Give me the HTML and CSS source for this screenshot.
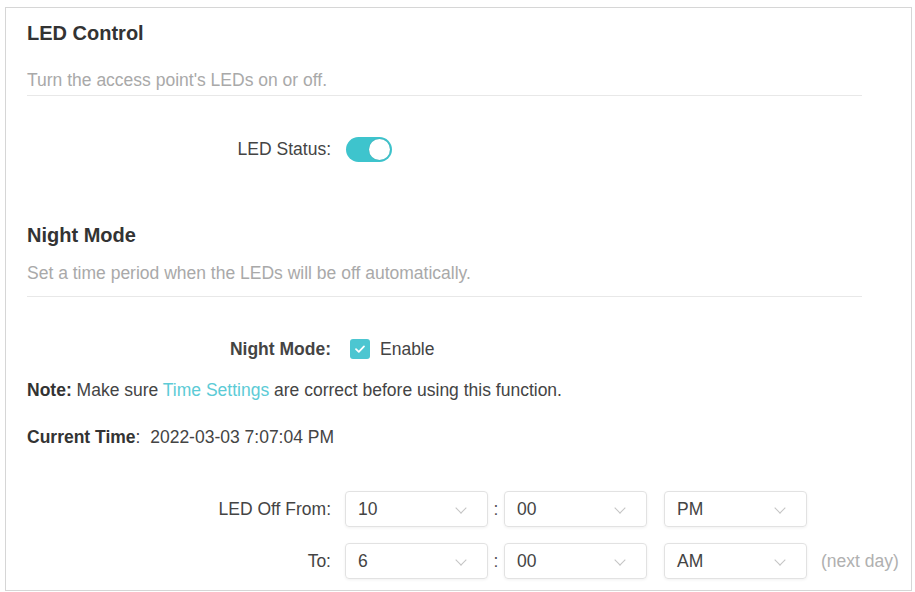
FILE: index.html
```html
<!DOCTYPE html>
<html>
<head>
    <title>LED Control</title>
    <link rel="stylesheet" href="styles.css">
</head>
<body>
    <div class="panel">
        <!-- LED Control -->
        <h2 class="section-title">LED Control</h2>
        <p class="section-desc first">Turn the access point's LEDs on or off.</p>

        <div class="form-row led-row">
            <label class="row-label">LED Status:</label>
            <span class="toggle on"><span class="knob"></span></span>
        </div>

        <!-- Night Mode -->
        <h2 class="section-title night-title">Night Mode</h2>
        <p class="section-desc second">Set a time period when the LEDs will be off automatically.</p>

        <div class="form-row night-row">
            <label class="row-label bold">Night Mode:</label>
            <span class="checkbox checked">
                <svg width="12" height="10" viewBox="0 0 12 10"><path d="M2 5.2 L4.8 7.8 L10 2.4" fill="none" stroke="#fff" stroke-width="1.8" stroke-linecap="round" stroke-linejoin="round"/></svg>
            </span>
            <span class="check-text">Enable</span>
        </div>

        <p class="note"><b>Note:</b> Make sure <a href="#" class="link">Time Settings</a> are correct before using this function.</p>

        <p class="current-time"><b>Current Time</b>:&nbsp; 2022-03-03 7:07:04 PM</p>

        <div class="form-row time-row from-row">
            <label class="row-label">LED Off From:</label>
            <div class="select"><span>10</span><i class="chevron"></i></div>
            <span class="colon">:</span>
            <div class="select"><span>00</span><i class="chevron"></i></div>
            <div class="select ampm"><span>PM</span><i class="chevron"></i></div>
        </div>

        <div class="form-row time-row to-row">
            <label class="row-label">To:</label>
            <div class="select"><span>6</span><i class="chevron"></i></div>
            <span class="colon">:</span>
            <div class="select"><span>00</span><i class="chevron"></i></div>
            <div class="select ampm"><span>AM</span><i class="chevron"></i></div>
            <span class="hint">(next day)</span>
        </div>
    </div>
</body>
</html>
```

FILE: styles.css
```css
body {
    margin: 0;
    font-family: "Liberation Sans", Arial, sans-serif;
    color: #333;
    background: #fff;
}
.panel {
    margin: 7px 0 0 5px;
    width: 907px;
    height: 584px;
    box-sizing: border-box;
    border: 1px solid #d6d6d6;
    padding: 13px 21px 0;
}
.section-title {
    margin: 0;
    font-size: 20px;
    line-height: 24px;
    font-weight: bold;
    color: #333;
}
.night-title {
    margin-top: 61px;
}
.section-desc {
    width: 835px;
    margin: 0;
    font-size: 17.5px;
    line-height: 20px;
    color: #a9a9a9;
    border-bottom: 1px solid #e8e8e8;
}
.section-desc.first {
    margin-top: 25px;
    padding-bottom: 5px;
}
.section-desc.second {
    margin-top: 16px;
    padding-bottom: 13px;
}
.form-row {
    display: flex;
    align-items: center;
    font-size: 17.5px;
}
.row-label {
    width: 304px;
    flex-shrink: 0;
    text-align: right;
    padding-right: 15px;
    color: #444;
    white-space: nowrap;
}
.row-label.bold {
    font-weight: bold;
    padding-right: 19px;
}
.led-row {
    margin-top: 40px;
    height: 26px;
}
.toggle {
    position: relative;
    display: inline-block;
    width: 46px;
    height: 25px;
    border-radius: 13px;
    background: #3ec4cd;
}
.toggle .knob {
    position: absolute;
    top: 2px;
    right: 2px;
    width: 21px;
    height: 21px;
    border-radius: 50%;
    background: #fff;
    box-shadow: 0 0 1px rgba(0, 0, 0, 0.25);
}
.night-row {
    margin-top: 42px;
    height: 20px;
}
.checkbox {
    display: inline-flex;
    align-items: center;
    justify-content: center;
    width: 20px;
    height: 20px;
    border-radius: 3px;
    background: #4cc6d1;
}
.check-text {
    margin-left: 10px;
    color: #444;
}
.note,
.current-time {
    margin: 0;
    font-size: 17.5px;
    line-height: 20px;
    color: #444;
    white-space: nowrap;
}
.note {
    margin-top: 21px;
}
.note b,
.current-time b {
    color: #333;
}
.link {
    color: #5ccbd6;
    text-decoration: none;
}
.current-time {
    margin-top: 27px;
}
.time-row {
    height: 36px;
}
.from-row {
    margin-top: 44px;
}
.to-row {
    margin-top: 16px;
}
.time-row .row-label {
    padding-right: 14px;
}
.select {
    position: relative;
    flex-shrink: 0;
    width: 143px;
    height: 36px;
    box-sizing: border-box;
    border: 1px solid #e2e2e2;
    border-radius: 4px;
    box-shadow: 0 1px 3px rgba(0, 0, 0, 0.06);
    display: flex;
    align-items: center;
    padding-left: 12px;
    color: #444;
}
.select.ampm {
    margin-left: 17px;
}
.chevron {
    position: absolute;
    right: 22px;
    top: 12px;
    width: 7px;
    height: 7px;
    border-right: 1.3px solid #c4c4c4;
    border-bottom: 1.3px solid #c4c4c4;
    transform: rotate(45deg);
}
.colon {
    flex-shrink: 0;
    width: 16px;
    text-align: center;
    color: #555;
}
.hint {
    flex-shrink: 0;
    margin-left: 14px;
    color: #b0b0b0;
    white-space: nowrap;
}
```
